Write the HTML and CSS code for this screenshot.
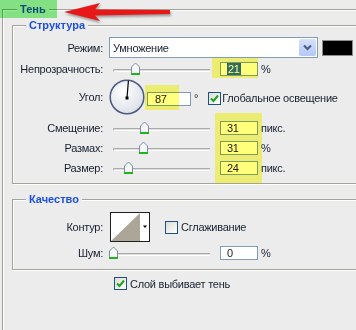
FILE: index.html
```html
<!DOCTYPE html>
<html lang="ru">
<head>
    <meta charset="UTF-8">
    <meta name="viewport" content="width=device-width, initial-scale=1.0">
    <title>Тень</title>
    <link rel="stylesheet" href="styles.css">
</head>
<body>
    <fieldset class="group outer">
        <legend class="caption">Тень</legend>

        <fieldset class="group section">
            <legend class="caption">Структура</legend>

            <div class="row row-mode">
                <span class="label">Режим:</span>
                <div class="select">
                    <span class="select-value">Умножение</span>
                    <span class="select-btn">
                        <svg viewBox="0 0 17 17" width="17" height="17"><path d="M5 6.5 L8.5 10 L12 6.5" fill="none" stroke="#4a5e86" stroke-width="2.2"/></svg>
                    </span>
                </div>
                <span class="swatch"></span>
            </div>

            <div class="row row-opacity">
                <span class="label">Непрозрачность:</span>
                <div class="slider">
                    <svg class="thumb" viewBox="0 0 11 13" width="11" height="13" style="left: 17px"><path d="M1.5 12 V5 L5.5 1 L9.5 5 V12 Z" fill="#f6f7f6" stroke="#7d8da6"/><rect x="1" y="11" width="9" height="2" fill="#1fb41f"/></svg>
                </div>
                <span class="field"><span class="selected">21</span></span>
                <span class="unit">%</span>
            </div>

            <div class="row row-angle">
                <span class="label">Угол:</span>
                <svg class="dial" viewBox="0 0 36 36" width="36" height="36">
                    <defs>
                        <radialGradient id="dialFill" cx="40%" cy="35%" r="70%">
                            <stop offset="0" stop-color="#ffffff"/>
                            <stop offset="1" stop-color="#dadee6"/>
                        </radialGradient>
                    </defs>
                    <circle cx="18" cy="18" r="16.8" fill="url(#dialFill)" stroke="#4b5b80" stroke-width="1.5"/>
                    <line x1="18" y1="19" x2="19.4" y2="1.8" stroke="#000" stroke-width="1.2"/>
                    <rect x="16.5" y="17.5" width="3" height="3" fill="#000"/>
                </svg>
                <span class="field field-angle">87</span>
                <span class="degree">°</span>
                <span class="check"><svg viewBox="0 0 11 11" width="11" height="11"><path d="M2 5.5 L4.5 8 L9 2.5" fill="none" stroke="#1fa31f" stroke-width="2"/></svg></span>
                <span class="check-text">Глобальное освещение</span>
            </div>

            <div class="row row-slider">
                <span class="label">Смещение:</span>
                <div class="slider">
                    <svg class="thumb" viewBox="0 0 11 13" width="11" height="13" style="left: 26px"><path d="M1.5 12 V5 L5.5 1 L9.5 5 V12 Z" fill="#f6f7f6" stroke="#7d8da6"/><rect x="1" y="11" width="9" height="2" fill="#1fb41f"/></svg>
                </div>
                <span class="field">31</span>
                <span class="unit">пикс.</span>
            </div>

            <div class="row row-slider">
                <span class="label">Размах:</span>
                <div class="slider">
                    <svg class="thumb" viewBox="0 0 11 13" width="11" height="13" style="left: 25px"><path d="M1.5 12 V5 L5.5 1 L9.5 5 V12 Z" fill="#f6f7f6" stroke="#7d8da6"/><rect x="1" y="11" width="9" height="2" fill="#1fb41f"/></svg>
                </div>
                <span class="field">31</span>
                <span class="unit">%</span>
            </div>

            <div class="row row-slider">
                <span class="label">Размер:</span>
                <div class="slider">
                    <svg class="thumb" viewBox="0 0 11 13" width="11" height="13" style="left: 10px"><path d="M1.5 12 V5 L5.5 1 L9.5 5 V12 Z" fill="#f6f7f6" stroke="#7d8da6"/><rect x="1" y="11" width="9" height="2" fill="#1fb41f"/></svg>
                </div>
                <span class="field">24</span>
                <span class="unit">пикс.</span>
            </div>
        </fieldset>

        <fieldset class="group section quality">
            <legend class="caption">Качество</legend>

            <div class="row row-contour">
                <span class="label">Контур:</span>
                <span class="contour">
                    <svg viewBox="0 0 38 28" width="38" height="28"><polygon points="0,28 29,0 29,28" fill="#aba697"/><polygon points="32,12.5 36,12.5 34,15" fill="#000"/></svg>
                </span>
                <span class="check check-off"></span>
                <span class="check-text">Сглаживание</span>
            </div>

            <div class="row row-slider">
                <span class="label">Шум:</span>
                <div class="slider">
                    <svg class="thumb" viewBox="0 0 11 13" width="11" height="13" style="left: -5px"><path d="M1.5 12 V5 L5.5 1 L9.5 5 V12 Z" fill="#f6f7f6" stroke="#7d8da6"/><rect x="1" y="11" width="9" height="2" fill="#1fb41f"/></svg>
                </div>
                <span class="field">0</span>
                <span class="unit">%</span>
            </div>
        </fieldset>

        <div class="row row-knockout">
            <span class="check"><svg viewBox="0 0 11 11" width="11" height="11"><path d="M2 5.5 L4.5 8 L9 2.5" fill="none" stroke="#1fa31f" stroke-width="2"/></svg></span>
            <span class="check-text">Слой выбивает тень</span>
        </div>
    </fieldset>

    <!-- пометки поверх скриншота -->
    <span class="marker marker-green"></span>
    <span class="marker marker-opacity"></span>
    <span class="marker marker-angle"></span>
    <span class="marker marker-offsets"></span>
    <svg class="arrow" viewBox="60 0 116 24" width="116" height="24">
        <polygon points="64,12 100,3 95,9.5 170,10 170,14 95,15.5 100,21" fill="#e81818"/>
    </svg>
</body>
</html>
```

FILE: styles.css
```css
body {
    margin: 0;
    width: 356px;
    height: 330px;
    overflow: hidden;
    position: relative;
    background-color: #ececec;
    font-family: "Liberation Sans", Arial, sans-serif;
    font-size: 11px;
    letter-spacing: -0.25px;
    color: #17202f;
}
.group {
    margin: 0;
    padding: 0;
    border: 1px solid #a4a397;
    box-shadow: inset 1px 1px #fff, 1px 1px #fff;
}
.outer {
    margin-left: 2px;
    width: 420px;
    padding: 0 0 60px 9px;
}
.caption {
    padding: 0 3px;
    margin-left: 13px;
    line-height: 14px;
    font-weight: bold;
    letter-spacing: 0;
    color: #1e4fe0;
    background-color: #ececec;
}
.outer > .caption {
    line-height: 18px;
    margin-left: 5px;
}
.section {
    padding: 5px 0 8px 0;
}
.quality {
    margin-top: 8px;
    padding: 6px 0 9px 0;
}
.row {
    display: flex;
    align-items: center;
}
.label {
    flex: none;
    width: 90px;
    text-align: right;
}
.row-mode {
    height: 21px;
}
.select {
    display: flex;
    align-items: center;
    justify-content: space-between;
    box-sizing: border-box;
    width: 209px;
    height: 21px;
    margin-left: 6px;
    padding: 0 1px 0 3px;
    background: #fff;
    border: 1px solid #7f9db9;
}
.select-btn {
    display: flex;
    width: 17px;
    height: 17px;
    border-radius: 2px;
    background: linear-gradient(#d6e1fc, #b4c7f7);
}
.swatch {
    width: 29px;
    height: 14px;
    margin-left: 4px;
    background: #000;
    border: 1px solid #8c8c8c;
}
.row-opacity {
    margin-top: 4px;
    height: 14px;
}
.slider {
    position: relative;
    flex: none;
    width: 97px;
    height: 14px;
    margin-left: 10px;
}
.slider::before {
    content: "";
    position: absolute;
    left: 0;
    right: 0;
    top: 7px;
    height: 1px;
    border: 1px solid #a9a9a9;
    border-bottom-color: #fff;
    border-right: none;
    border-radius: 2px 0 0 2px;
    background: #dedede;
}
.thumb {
    position: absolute;
    top: 0;
}
.field {
    box-sizing: border-box;
    flex: none;
    width: 38px;
    height: 14px;
    margin-left: 10px;
    padding-left: 6px;
    line-height: 12px;
    background: #fff;
    border: 1px solid #7f9db9;
    color: #201818;
}
.selected {
    padding: 0 1px;
    background: #316ac5;
    color: #fff;
}
.unit {
    margin-left: 3px;
}
.row-angle {
    margin-top: 3px;
}
.dial {
    margin-left: 6px;
}
.field-angle {
    width: 44px;
    margin-left: 2px;
    padding-left: 7px;
    margin-top: 4px;
}
.degree {
    margin-left: 3px;
    margin-top: 2px;
}
.check {
    box-sizing: border-box;
    display: flex;
    align-items: center;
    justify-content: center;
    flex: none;
    width: 13px;
    height: 13px;
    margin-left: 10px;
    margin-top: 2px;
    border: 1px solid #1c5180;
    background: linear-gradient(135deg, #dcdcd6, #fff);
}
.check-text {
    margin-left: 1px;
    margin-top: 2px;
}
.row-slider {
    margin-top: 6px;
    height: 14px;
}
.row-contour .contour {
    display: flex;
    margin-left: 7px;
    background: #fff;
    border: 1px solid #202020;
}
.row-contour .check {
    margin-left: 15px;
    margin-top: 0;
}
.row-contour .check-text {
    margin-left: 3px;
    margin-top: 0;
}
.quality .row-slider {
    margin-top: 4px;
}
.row-knockout {
    margin-top: 7px;
}
.row-knockout .check {
    margin-left: 102px;
    margin-top: 0;
}
.row-knockout .check-text {
    margin-left: 3px;
    margin-top: 0;
}
.marker {
    position: absolute;
    mix-blend-mode: multiply;
    background: #ffff7c;
}
.marker-green {
    left: 0;
    top: 0;
    width: 57px;
    height: 18px;
    background: #8ef28e;
}
.marker-opacity {
    left: 212px;
    top: 58px;
    width: 46px;
    height: 20px;
}
.marker-angle {
    left: 145px;
    top: 85px;
    width: 34px;
    height: 25px;
}
.marker-offsets {
    left: 215px;
    top: 113px;
    width: 47px;
    height: 70px;
}
.arrow {
    position: absolute;
    left: 60px;
    top: 0;
    filter: drop-shadow(1px 2px 1px rgba(0, 0, 0, 0.35));
}
```
